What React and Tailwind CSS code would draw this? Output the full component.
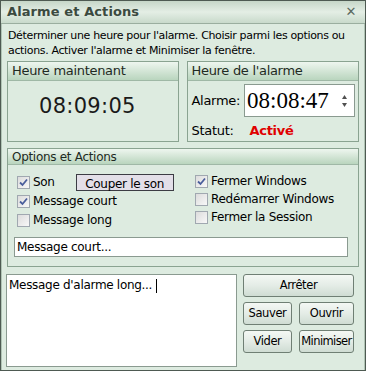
import React from 'react';

const ui = { fontFamily: '"DejaVu Sans", Verdana, sans-serif' };

const Check = ({ checked }) => (
  <span className="w-[13px] h-[13px] border border-[#a0a8b0] bg-gradient-to-br from-[#dcdcdc] to-[#f8f8f8] flex items-center justify-center shrink-0">
    {checked && (
      <svg width="9" height="9" viewBox="0 0 9 9">
        <path d="M1 4.5 L3.5 7 L8 1.5" stroke="#4a5e9c" strokeWidth="1.8" fill="none" />
      </svg>
    )}
  </span>
);

const Option = ({ checked, label }) => (
  <div className="flex items-center gap-[3px] h-[18px]">
    <Check checked={checked} />
    <span>{label}</span>
  </div>
);

const Btn = ({ children, className = '' }) => (
  <button
    className={`h-[23px] rounded-[3px] border border-[#6f7f74] bg-gradient-to-b from-[#f4f8f4] via-[#e4ece6] to-[#cfdcd3] text-[11.5px] tracking-[-0.4px] text-black ${className}`}
    style={ui}
  >
    {children}
  </button>
);

const GroupHead = ({ children, h = 'h-[19px]', size = 'text-[13px]' }) => (
  <div className={`${h} ${size} px-[4px] flex items-center text-[#1e2a22] bg-gradient-to-b from-[#eef6ef] to-[#b9d5be] border-b border-[#9fb8a6]`}>
    {children}
  </div>
);

export default function App() {
  return (
    <div className="w-[366px] h-[371px] border border-[#4e5a52] bg-[#ddebe0] flex flex-col tracking-[-0.3px]" style={ui}>
      {/* title bar */}
      <div className="h-[23px] flex items-center justify-between pl-[6px] pr-[9px] bg-gradient-to-b from-[#c6d6c8] via-[#e4eee5] to-[#c8dacb] border-b border-[#9aae9f]">
        <span className="font-bold text-[13px] text-[#3b4a40] tracking-[0.1px]">Alarme et Actions</span>
        <span className="font-bold text-[13px] text-[#5a6a60]">✕</span>
      </div>

      <div className="flex-1 flex flex-col px-[4px] border-x border-[#b0c4b5]">
        <p className="text-[11px] leading-[15px] text-black mt-[4px] ml-[2px] tracking-[-0.35px]">
          Déterminer une heure pour l'alarme. Choisir parmi les options ou actions. Activer l'alarme et Minimiser la fenêtre.
        </p>

        <div className="flex gap-[8px] mt-[3px] px-[1px]">
          <div className="w-[172px] h-[81px] border border-[#8aa391] flex flex-col">
            <GroupHead>Heure maintenant</GroupHead>
            <div className="flex-1 flex items-start pt-[10px] pl-[31px] text-[21px] tracking-[0.3px] text-[#1a1a1a]" style={{ fontFamily: '"DejaVu Sans", sans-serif' }}>
              08:09:05
            </div>
          </div>
          <div className="w-[173px] h-[81px] border border-[#8aa391] flex flex-col">
            <GroupHead>Heure de l'alarme</GroupHead>
            <div className="flex items-center mt-[3px] pl-[4px] gap-[4px]">
              <span className="text-[13px]">Alarme:</span>
              <div className="w-[111px] h-[33px] bg-white border border-[#8a9a90] flex items-center justify-between pl-[2px] pr-[7px]">
                <span className="text-[23px] leading-none text-black tracking-[0px]" style={{ fontFamily: '"Liberation Serif", serif' }}>08:08:47</span>
                <span className="flex flex-col gap-[4px]">
                  <svg width="5" height="4" viewBox="0 0 5 4"><path d="M2.5 0 L5 4 L0 4 Z" fill="#505050" /></svg>
                  <svg width="5" height="4" viewBox="0 0 5 4"><path d="M0 0 L5 0 L2.5 4 Z" fill="#505050" /></svg>
                </span>
              </div>
            </div>
            <div className="flex items-center mt-[4px] pl-[4px] text-[13px]">
              <span className="w-[58px]">Statut:</span>
              <span className="font-bold text-[#e00000]">Activé</span>
            </div>
          </div>
        </div>

        <div className="mt-[6px] mx-[1px] h-[119px] border border-[#8aa391] flex flex-col">
          <GroupHead h="h-[16px]" size="text-[12px]">Options et Actions</GroupHead>
          <div className="flex text-[12px] pl-[9px] pt-[8px]">
            <div className="w-[178px] flex flex-col gap-[1px]">
              <div className="flex items-center">
                <Option checked label="Son" />
                <button className="ml-[21px] w-[98px] h-[17px] bg-[#e3dfe8] border border-[#3c3c44] text-[12px] tracking-[-0.3px]" style={ui}>Couper le son</button>
              </div>
              <Option checked label="Message court" />
              <Option label="Message long" />
            </div>
            <div className="flex flex-col -mt-[1px]">
              <Option checked label="Fermer Windows" />
              <Option label="Redémarrer Windows" />
              <Option label="Fermer la Session" />
            </div>
          </div>
          <div className="mt-[8px] ml-[6px] w-[334px] h-[20px] bg-white border border-[#8a9a90] text-[12px] flex items-center px-[2px]">
            Message court...
          </div>
        </div>

        <div className="flex mt-[7px] gap-[6px]">
          <div className="w-[231px] h-[93px] bg-white border border-[#8a9a90] text-[12px] px-[2px] pt-[1px]">
            Message d'alarme long... <span className="inline-block w-px h-[14px] bg-black align-middle"></span>
          </div>
          <div className="w-[111px] flex flex-col gap-[5px]">
            <Btn className="w-[111px]">Arrêter</Btn>
            <div className="flex justify-between">
              <Btn className="w-[49px]">Sauver</Btn>
              <Btn className="w-[55px]">Ouvrir</Btn>
            </div>
            <div className="flex justify-between">
              <Btn className="w-[49px]">Vider</Btn>
              <Btn className="w-[55px] tracking-[-0.6px]">Minimiser</Btn>
            </div>
          </div>
        </div>
      </div>
    </div>
  );
}
